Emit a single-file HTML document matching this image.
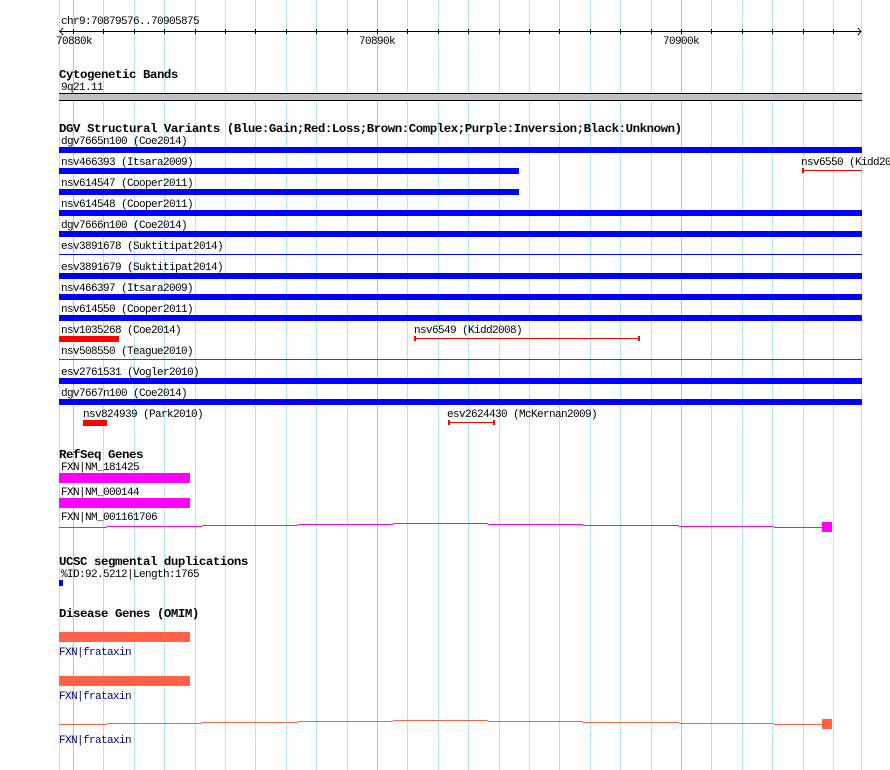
<!DOCTYPE html>
<html><head><meta charset="utf-8"><style>
html,body{margin:0;padding:0;background:#fff;width:890px;height:770px;overflow:hidden}
svg{display:block}
text{font-family:"Liberation Mono","DejaVu Sans Mono",monospace;font-size:11px;letter-spacing:-0.6px;fill:#000}
.t{font-weight:bold;font-size:12.4px;letter-spacing:-0.44px}
.n{fill:#000080}
</style></head><body>
<svg width="890" height="770" xmlns="http://www.w3.org/2000/svg">
<g shape-rendering="crispEdges">
<rect x="59" y="0" width="1" height="770" fill="#aee8ee"/>
<rect x="73" y="0" width="1" height="770" fill="#99cce8"/>
<rect x="103" y="0" width="1" height="770" fill="#aee8ee"/>
<rect x="134" y="0" width="1" height="770" fill="#aee8ee"/>
<rect x="164" y="0" width="1" height="770" fill="#aee8ee"/>
<rect x="195" y="0" width="1" height="770" fill="#aee8ee"/>
<rect x="225" y="0" width="1" height="770" fill="#aee8ee"/>
<rect x="255" y="0" width="1" height="770" fill="#aee8ee"/>
<rect x="286" y="0" width="1" height="770" fill="#aee8ee"/>
<rect x="316" y="0" width="1" height="770" fill="#aee8ee"/>
<rect x="347" y="0" width="1" height="770" fill="#aee8ee"/>
<rect x="377" y="0" width="1" height="770" fill="#99cce8"/>
<rect x="407" y="0" width="1" height="770" fill="#aee8ee"/>
<rect x="438" y="0" width="1" height="770" fill="#aee8ee"/>
<rect x="468" y="0" width="1" height="770" fill="#aee8ee"/>
<rect x="499" y="0" width="1" height="770" fill="#aee8ee"/>
<rect x="529" y="0" width="1" height="770" fill="#aee8ee"/>
<rect x="559" y="0" width="1" height="770" fill="#aee8ee"/>
<rect x="590" y="0" width="1" height="770" fill="#aee8ee"/>
<rect x="620" y="0" width="1" height="770" fill="#aee8ee"/>
<rect x="651" y="0" width="1" height="770" fill="#aee8ee"/>
<rect x="681" y="0" width="1" height="770" fill="#99cce8"/>
<rect x="711" y="0" width="1" height="770" fill="#aee8ee"/>
<rect x="742" y="0" width="1" height="770" fill="#aee8ee"/>
<rect x="772" y="0" width="1" height="770" fill="#aee8ee"/>
<rect x="803" y="0" width="1" height="770" fill="#aee8ee"/>
<rect x="833" y="0" width="1" height="770" fill="#aee8ee"/>
<rect x="861" y="0" width="1" height="770" fill="#aee8ee"/>

<rect x="59" y="31" width="802" height="1" fill="#000"/>
<path d="M73 29v5M103 29v5M134 29v5M164 29v5M195 29v5M225 29v5M255 29v5M286 29v5M316 29v5M347 29v5M377 29v5M407 29v5M438 29v5M468 29v5M499 29v5M529 29v5M559 29v5M590 29v5M620 29v5M651 29v5M681 29v5M711 29v5M742 29v5M772 29v5M803 29v5M833 29v5" stroke="#000" stroke-width="1" transform="translate(0.5,0)"/>
<path d="M63 28l-3 3.5 3 3.5M858 28l3 3.5-3 3.5" stroke="#000" fill="none"/>

<rect x="59" y="93" width="803" height="8" fill="#c0c0c0"/>
<rect x="59" y="93" width="803" height="1" fill="#000"/>
<rect x="59" y="100" width="803" height="1" fill="#000"/>

<rect x="59" y="147" width="803" height="6" fill="#0000ff"/>
<rect x="59" y="168" width="460" height="6" fill="#0000ff"/>
<rect x="803" y="170" width="59" height="1" fill="#ff0000"/>
<rect x="802" y="168" width="2" height="5" fill="#ff0000"/>
<rect x="59" y="189" width="460" height="6" fill="#0000ff"/>
<rect x="59" y="210" width="803" height="6" fill="#0000ff"/>
<rect x="59" y="231" width="803" height="6" fill="#0000ff"/>
<rect x="59" y="254" width="803" height="1" fill="#0000ff"/>
<rect x="59" y="273" width="803" height="6" fill="#0000ff"/>
<rect x="59" y="294" width="803" height="6" fill="#0000ff"/>
<rect x="59" y="315" width="803" height="6" fill="#0000ff"/>
<rect x="59" y="336" width="60" height="6" fill="#ff0000"/>
<rect x="414" y="338" width="225" height="1" fill="#ff0000"/>
<rect x="414" y="336" width="2" height="5" fill="#ff0000"/>
<rect x="638" y="336" width="2" height="5" fill="#ff0000"/>
<rect x="59" y="359" width="803" height="1" fill="#ff0000"/>
<rect x="59" y="378" width="803" height="6" fill="#0000ff"/>
<rect x="59" y="399" width="803" height="6" fill="#0000ff"/>
<rect x="83" y="420" width="24" height="6" fill="#ff0000"/>
<rect x="449" y="422" width="45" height="1" fill="#ff0000"/>
<rect x="448" y="420" width="2" height="5" fill="#ff0000"/>
<rect x="493" y="420" width="2" height="5" fill="#ff0000"/>

<rect x="59" y="473" width="131" height="10" fill="#ff00ff"/>
<rect x="59" y="498" width="131" height="10" fill="#ff00ff"/>
<path d="M59 527h48M107 526h95M202 525h96M298 524h95M393 523h95M488 524h95M583 525h96M679 526h95M774 527h48" stroke="#ff00ff" transform="translate(0,0.5)"/>
<rect x="822" y="522" width="10" height="10" fill="#ff00ff"/>

<rect x="59" y="580" width="4" height="6" fill="#0000ff"/>

<rect x="59" y="632" width="131" height="10" fill="#ff6347"/>
<rect x="59" y="676" width="131" height="10" fill="#ff6347"/>
<path d="M59 724h48M107 723h95M202 722h96M298 721h95M393 720h95M488 721h95M583 722h96M679 723h95M774 724h48" stroke="#ff6347" transform="translate(0,0.5)"/>
<rect x="822" y="719" width="10" height="10" fill="#ff6347"/>
</g>

<text x="61" y="24">chr9:70879576..70905875</text>
<text x="56" y="44">70880k</text>
<text x="359" y="44">70890k</text>
<text x="663" y="44">70900k</text>

<text class="t" x="59" y="78">Cytogenetic Bands</text>
<text x="61" y="90">9q21.11</text>

<text class="t" x="59" y="132">DGV Structural Variants (Blue:Gain;Red:Loss;Brown:Complex;Purple:Inversion;Black:Unknown)</text>
<text x="61" y="144">dgv7665n100 (Coe2014)</text>
<text x="61" y="165">nsv466393 (Itsara2009)</text>
<text x="801" y="165">nsv6550 (Kidd2008)</text>
<text x="61" y="186">nsv614547 (Cooper2011)</text>
<text x="61" y="207">nsv614548 (Cooper2011)</text>
<text x="61" y="228">dgv7666n100 (Coe2014)</text>
<text x="61" y="249">esv3891678 (Suktitipat2014)</text>
<text x="61" y="270">esv3891679 (Suktitipat2014)</text>
<text x="61" y="291">nsv466397 (Itsara2009)</text>
<text x="61" y="312">nsv614550 (Cooper2011)</text>
<text x="61" y="333">nsv1035268 (Coe2014)</text>
<text x="414" y="333">nsv6549 (Kidd2008)</text>
<text x="61" y="354">nsv508550 (Teague2010)</text>
<text x="61" y="375">esv2761531 (Vogler2010)</text>
<text x="61" y="396">dgv7667n100 (Coe2014)</text>
<text x="83" y="417">nsv824939 (Park2010)</text>
<text x="447" y="417">esv2624430 (McKernan2009)</text>

<text class="t" x="59" y="458">RefSeq Genes</text>
<text x="61" y="470">FXN|NM_181425</text>
<text x="61" y="495">FXN|NM_000144</text>
<text x="61" y="520">FXN|NM_001161706</text>

<text class="t" x="59" y="565">UCSC segmental duplications</text>
<text x="61" y="577">%ID:92.5212|Length:1765</text>

<text class="t" x="59" y="617">Disease Genes (OMIM)</text>
<text class="n" x="59" y="655">FXN|frataxin</text>
<text class="n" x="59" y="699">FXN|frataxin</text>
<text class="n" x="59" y="743">FXN|frataxin</text>
</svg>
</body></html>
